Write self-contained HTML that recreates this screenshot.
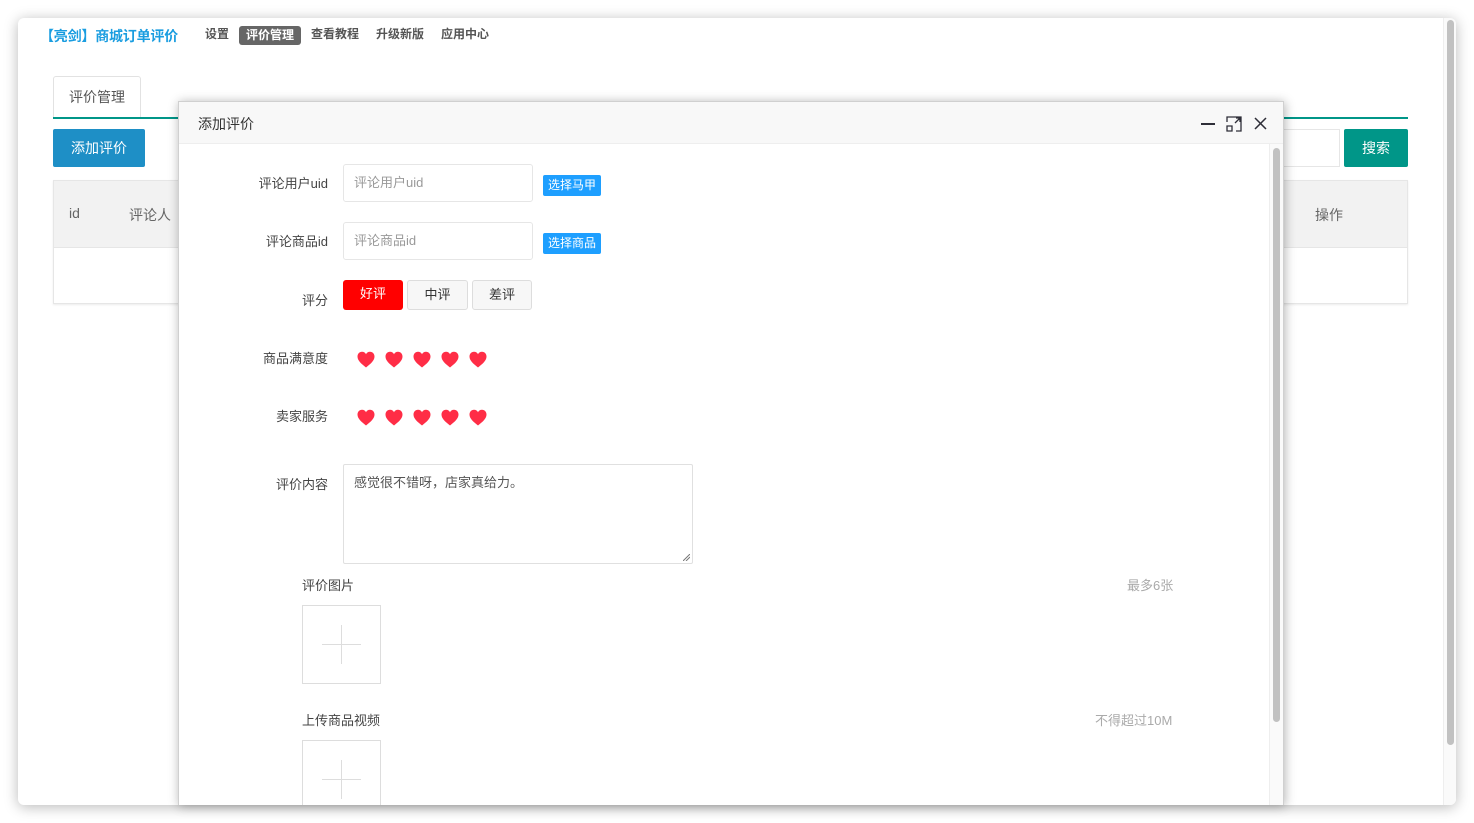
<!DOCTYPE html>
<html><head><meta charset="utf-8"><style>
*{box-sizing:border-box;margin:0;padding:0}
body{width:1474px;height:823px;background:#fff;position:relative;overflow:hidden;font-family:"Liberation Sans","Noto Sans CJK SC",sans-serif;font-size:13px;color:#333}
.abs{position:absolute}
.win{left:18px;top:18px;width:1438px;height:787px;background:#fff;border-radius:6px;box-shadow:0 2px 14px rgba(0,0,0,.28);overflow:hidden}
.nav span{position:absolute;top:7px;font-size:12px;font-weight:bold;color:#555;line-height:18px}
.heart{position:absolute;width:18px;height:17px}
.lbl{position:absolute;right:0;text-align:right;font-size:13px;color:#444}
</style></head><body>
<div class="abs win">
  <div class="abs" style="left:22px;top:8px;font-size:14px;font-weight:bold;color:#1a9de0;letter-spacing:-0.2px">【亮剑】商城订单评价</div>
  <div class="nav">
    <span style="left:187px">设置</span>
    <span style="left:221px;top:8px;background:#666;color:#fff;padding:0 7px;border-radius:3px;line-height:19px">评价管理</span>
    <span style="left:293px">查看教程</span>
    <span style="left:358px">升级新版</span>
    <span style="left:423px">应用中心</span>
  </div>
  <div class="abs" style="left:35px;top:58px;width:88px;height:42px;border:1px solid #e2e2e2;border-bottom:none;border-radius:3px 3px 0 0;background:#fff;text-align:center;line-height:40px;font-size:14px;color:#555">评价管理</div>
  <div class="abs" style="left:35px;top:99px;width:1355px;height:2px;background:#009688"></div>
  <div class="abs" style="left:35px;top:111px;width:92px;height:38px;background:#1e8fc6;color:#fff;border-radius:2px;text-align:center;line-height:38px;font-size:14px">添加评价</div>
  <div class="abs" style="left:1240px;top:111px;width:82px;height:38px;border:1px solid #e6e6e6"></div>
  <div class="abs" style="left:1326px;top:111px;width:64px;height:38px;background:#009688;color:#fff;border-radius:2px;text-align:center;line-height:38px;font-size:14px">搜索</div>
  <div class="abs" style="left:35px;top:162px;width:1355px;height:124px;border:1px solid #e6e6e6;box-shadow:0 1px 2px rgba(0,0,0,.08)">
    <div style="height:67px;background:#f2f2f2;border-bottom:1px solid #e6e6e6;position:relative;color:#666;font-size:14px">
      <span class="abs" style="left:15px;top:24px">id</span>
      <span class="abs" style="left:75px;top:24px">评论人</span>
      <span class="abs" style="left:1261px;top:24px">操作</span>
    </div>
  </div>
  <div class="abs" style="left:1425px;top:0;width:13px;height:787px;background:#fafafa;border-left:1px solid #eee"></div>
  <div class="abs" style="left:1429px;top:2px;width:7px;height:725px;background:#c1c1c1;border-radius:4px"></div>
</div>
<div class="abs" style="left:178px;top:101px;width:1106px;height:704px;background:#fff;box-shadow:1px 1px 10px rgba(0,0,0,.3);border:1px solid #d0d0d0;border-bottom:none;overflow:hidden">
  <div style="height:42px;background:#f8f8f8;border-bottom:1px solid #eee;position:relative">
    <span class="abs" style="left:19px;top:12px;font-size:14px;color:#333">添加评价</span>
    <div class="abs" style="left:1022px;top:21px;width:14px;height:2px;background:#2e2e38"></div>
    <svg class="abs" style="left:1047px;top:14px" width="16" height="16" viewBox="0 0 16 16" fill="none" stroke="#2e2e38" stroke-width="1.3"><path d="M1 6V1h14v14H10M9 7l5-5M10 2h4v4M1 10h5v5H1z"/></svg>
    <svg class="abs" style="left:1075px;top:15px" width="13" height="13" viewBox="0 0 13 13" stroke="#2e2e38" stroke-width="1.5"><path d="M1 1l11 11M12 1L1 12"/></svg>
  </div>
  <div class="abs" style="left:1090px;top:42px;width:15px;height:680px;background:#fafafa;border-left:1px solid #eee"></div>
  <div class="abs" style="left:1094px;top:46px;width:7px;height:574px;background:#c1c1c1;border-radius:4px"></div>

  <div class="abs" style="left:0;top:0;width:149px">
    <div class="lbl" style="top:71px">评论用户uid</div>
    <div class="lbl" style="top:129px">评论商品id</div>
    <div class="lbl" style="top:188px">评分</div>
    <div class="lbl" style="top:246px">商品满意度</div>
    <div class="lbl" style="top:304px">卖家服务</div>
    <div class="lbl" style="top:372px">评价内容</div>
  </div>
  <div class="abs" style="left:164px;top:62px;width:190px;height:38px;border:1px solid #e6e6e6;border-radius:3px;padding-left:10px;line-height:36px;color:#999">评论用户uid</div>
  <div class="abs" style="left:364px;top:73px;width:58px;height:21px;background:#1e9fff;color:#fff;font-size:12px;line-height:21px;text-align:center;border-radius:2px">选择马甲</div>
  <div class="abs" style="left:164px;top:120px;width:190px;height:38px;border:1px solid #e6e6e6;border-radius:3px;padding-left:10px;line-height:36px;color:#999">评论商品id</div>
  <div class="abs" style="left:364px;top:131px;width:58px;height:21px;background:#1e9fff;color:#fff;font-size:12px;line-height:21px;text-align:center;border-radius:2px">选择商品</div>
  <div class="abs" style="left:164px;top:178px;width:60px;height:30px;background:#ff0000;color:#fff;border-radius:3px;text-align:center;line-height:28px">好评</div>
  <div class="abs" style="left:228px;top:178px;width:61px;height:30px;background:#f7f7f7;border:1px solid #ddd;border-radius:3px;text-align:center;line-height:28px;color:#333">中评</div>
  <div class="abs" style="left:293px;top:178px;width:60px;height:30px;background:#f7f7f7;border:1px solid #ddd;border-radius:3px;text-align:center;line-height:28px;color:#333">差评</div>

  <div class="abs" style="left:164px;top:362px;width:350px;height:100px;border:1px solid #e0e0e0;border-radius:2px;padding:7px 10px;font-size:13px;color:#555">感觉很不错呀，店家真给力。
    <svg class="abs" style="right:2px;bottom:2px" width="7" height="7" stroke="#777"><path d="M0 7L7 0M3 7L7 3"/></svg></div>
  <div class="abs" style="left:123px;top:473px;font-size:13px;color:#444">评价图片</div>
  <div class="abs" style="left:948px;top:473px;font-size:13px;color:#aaa">最多6张</div>
  <div class="abs" style="left:123px;top:503px;width:79px;height:79px;border:1px solid #ddd"><div class="abs" style="left:19px;top:38px;width:39px;height:1px;background:#ddd"></div><div class="abs" style="left:38px;top:19px;width:1px;height:39px;background:#ddd"></div></div>
  <div class="abs" style="left:123px;top:608px;font-size:13px;color:#444">上传商品视频</div>
  <div class="abs" style="left:916px;top:608px;font-size:13px;color:#aaa">不得超过10M</div>
  <div class="abs" style="left:123px;top:638px;width:79px;height:79px;border:1px solid #ddd"><div class="abs" style="left:19px;top:38px;width:39px;height:1px;background:#ddd"></div><div class="abs" style="left:38px;top:19px;width:1px;height:39px;background:#ddd"></div></div>
</div>
<svg width="0" height="0" style="position:absolute"><defs><path id="h" d="M9 16.5C4 12.5 0.5 9.5 0.5 5.5 0.5 2.8 2.5 0.8 5 0.8 6.8 0.8 8.2 1.8 9 3.2 9.8 1.8 11.2 0.8 13 0.8 15.5 0.8 17.5 2.8 17.5 5.5 17.5 9.5 14 12.5 9 16.5Z" fill="#ff2d46"/></defs></svg>
<svg class="heart" style="left:357px;top:351px"><use href="#h"/></svg>
<svg class="heart" style="left:385px;top:351px"><use href="#h"/></svg>
<svg class="heart" style="left:413px;top:351px"><use href="#h"/></svg>
<svg class="heart" style="left:441px;top:351px"><use href="#h"/></svg>
<svg class="heart" style="left:469px;top:351px"><use href="#h"/></svg>
<svg class="heart" style="left:357px;top:409px"><use href="#h"/></svg>
<svg class="heart" style="left:385px;top:409px"><use href="#h"/></svg>
<svg class="heart" style="left:413px;top:409px"><use href="#h"/></svg>
<svg class="heart" style="left:441px;top:409px"><use href="#h"/></svg>
<svg class="heart" style="left:469px;top:409px"><use href="#h"/></svg>
</body></html>
